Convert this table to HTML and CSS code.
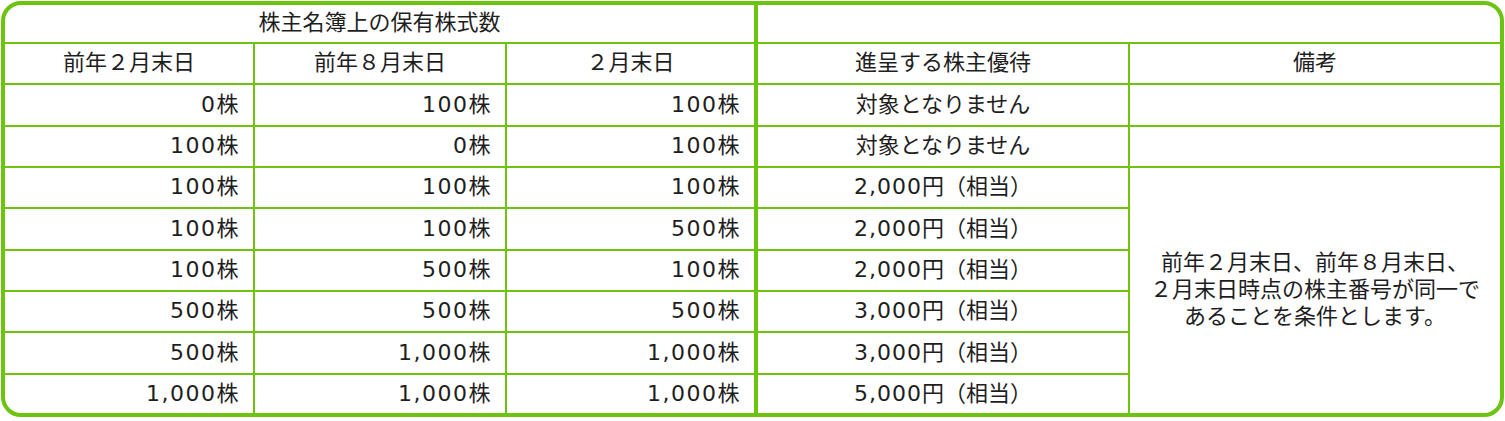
FILE: index.html
```html
<!DOCTYPE html>
<html lang="ja">
<head>
<meta charset="utf-8">
<title>株主優待</title>
<link rel="stylesheet" href="styles.css">
</head>
<body>
<div class="frame">
  <div class="grid">
    <div class="cell head span3 r1">株主名簿上の保有株式数</div>
    <div class="cell head span2 r1 last-col"></div>

    <div class="cell head">前年２月末日</div>
    <div class="cell head">前年８月末日</div>
    <div class="cell head thick">２月末日</div>
    <div class="cell head">進呈する株主優待</div>
    <div class="cell head last-col">備考</div>

    <div class="cell num">0株</div>
    <div class="cell num">100株</div>
    <div class="cell num thick">100株</div>
    <div class="cell center">対象となりません</div>
    <div class="cell last-col"></div>

    <div class="cell num">100株</div>
    <div class="cell num">0株</div>
    <div class="cell num thick">100株</div>
    <div class="cell center">対象となりません</div>
    <div class="cell last-col"></div>

    <div class="cell num">100株</div>
    <div class="cell num">100株</div>
    <div class="cell num thick">100株</div>
    <div class="cell center"><span class="amt">2,000</span>円（相当）</div>
    <div class="cell note last-col last-row">前年２月末日、前年８月末日、<br>２月末日時点の株主番号が同一で<br>あることを条件とします。</div>

    <div class="cell num">100株</div>
    <div class="cell num">100株</div>
    <div class="cell num thick">500株</div>
    <div class="cell center"><span class="amt">2,000</span>円（相当）</div>

    <div class="cell num">100株</div>
    <div class="cell num">500株</div>
    <div class="cell num thick">100株</div>
    <div class="cell center"><span class="amt">2,000</span>円（相当）</div>

    <div class="cell num">500株</div>
    <div class="cell num">500株</div>
    <div class="cell num thick">500株</div>
    <div class="cell center"><span class="amt">3,000</span>円（相当）</div>

    <div class="cell num">500株</div>
    <div class="cell num">1,000株</div>
    <div class="cell num thick">1,000株</div>
    <div class="cell center"><span class="amt">3,000</span>円（相当）</div>

    <div class="cell num last-row">1,000株</div>
    <div class="cell num last-row">1,000株</div>
    <div class="cell num thick last-row">1,000株</div>
    <div class="cell center last-row"><span class="amt">5,000</span>円（相当）</div>
  </div>
</div>
</body>
</html>
```
FILE: styles.css
```css
html, body {
  margin: 0;
  padding: 0;
  background: #ffffff;
}

body {
  padding: 1px;
  font-family: "DejaVu Sans", "Noto Sans CJK JP", sans-serif;
  font-size: 22px;
  color: #1e1e1e;
}

.frame {
  width: 1503px;
  height: 416px;
  box-sizing: border-box;
  border: 4px solid #6cc40f;
  border-radius: 20px;
  overflow: hidden;
  background: #ffffff;
}

.grid {
  display: grid;
  grid-template-columns: 250px 252px 251px 372px 370px;
  grid-template-rows: 39px 41px 42px 41px 41px 42px 41px 41px 42px 38px;
}

.cell {
  box-sizing: border-box;
  border-right: 2px solid #6cc40f;
  border-bottom: 2px solid #6cc40f;
  display: flex;
  align-items: center;
  line-height: 27px;
  white-space: nowrap;
  padding-bottom: 2px;
}

.head,
.center {
  justify-content: center;
}

.r1 {
  padding-bottom: 3px;
}

.num {
  justify-content: flex-end;
  padding-right: 13px;
  letter-spacing: 1.5px;
}

.amt {
  letter-spacing: 1px;
}

.thick {
  border-right-width: 4px;
}

.span3 {
  grid-column: span 3;
  border-right-width: 4px;
}

.span2 {
  grid-column: span 2;
}

.note {
  grid-row: span 6;
  justify-content: center;
  text-align: center;
}

.last-col {
  border-right: none;
}

.last-row {
  border-bottom: none;
}
```
